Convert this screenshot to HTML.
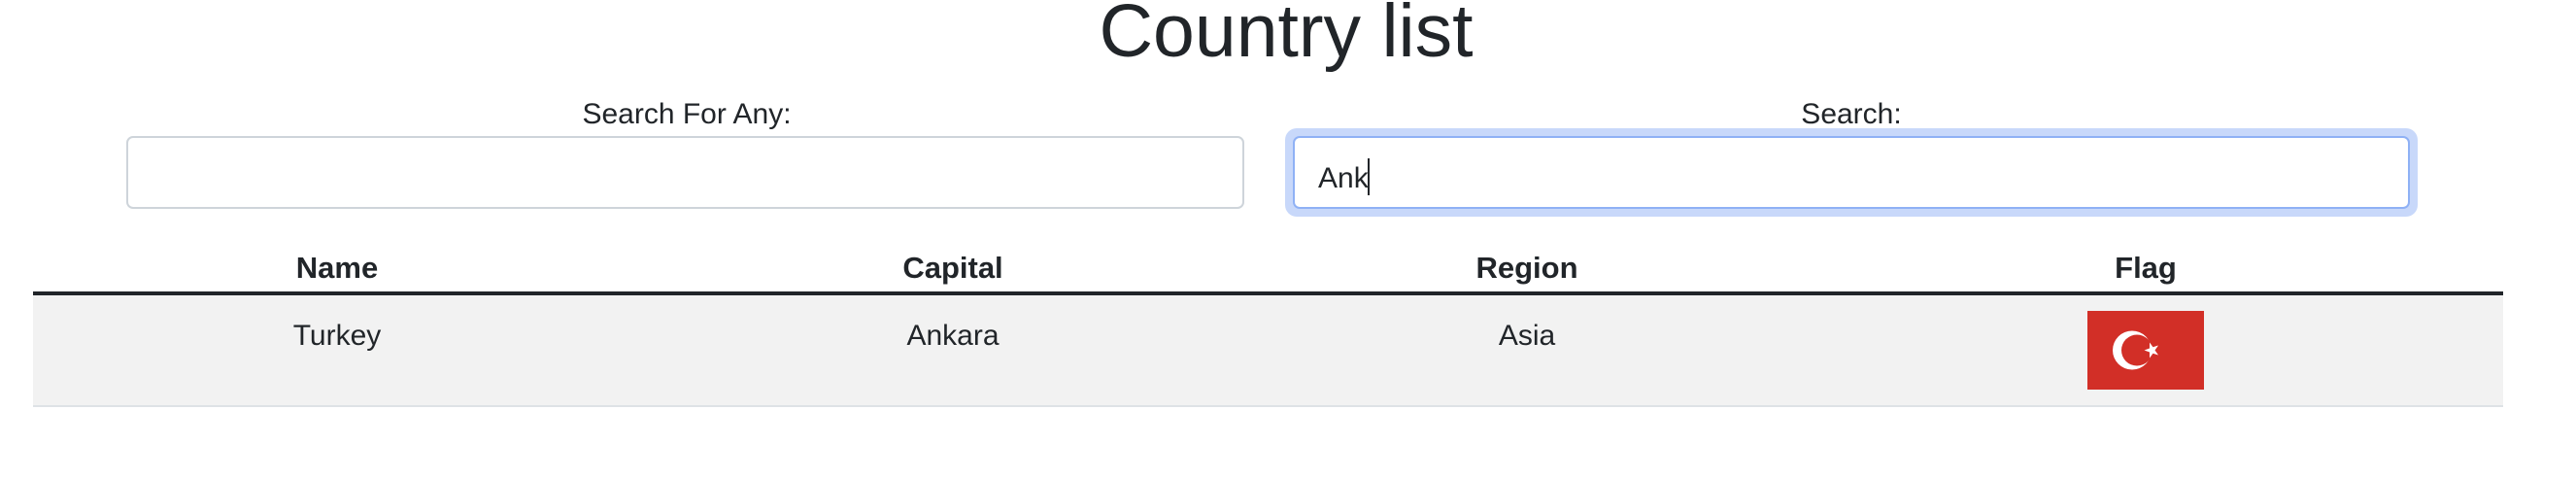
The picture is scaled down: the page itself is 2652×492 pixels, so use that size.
<!DOCTYPE html>
<html><head><meta charset="utf-8"><style>
html,body{margin:0;padding:0;background:#fff;width:2652px;height:492px;overflow:hidden;font-family:"Liberation Sans",Arial,sans-serif;color:#212529}
.a{position:absolute;white-space:nowrap;line-height:1}
.c{transform:translateX(-50%)}
.inp{position:absolute;box-sizing:border-box;border:2px solid #ced4da;border-radius:7px;background:#fff}
</style></head><body>
<div class="a c" style="left:1324px;top:-6px;font-size:77px;font-weight:500">Country list</div>
<div class="a c" style="left:707px;top:103px;font-size:30px">Search For Any:</div>
<div class="a c" style="left:1906px;top:103px;font-size:30px">Search:</div>
<div class="inp" style="left:130px;top:140px;width:1151px;height:75px"></div>
<div style="position:absolute;left:1323px;top:132px;width:1166px;height:91px;border-radius:12px;background:#c8d8fa"></div>
<div class="inp" style="left:1331px;top:140px;width:1150px;height:75px;border-color:#8fb1f5"></div>
<div class="a" style="left:1357px;top:163px;font-size:30px">Ank<span style="display:inline-block;width:2px;height:38px;background:#212529;vertical-align:-8px;margin-left:-1px"></span></div>
<div class="a c" style="left:347px;top:260px;font-size:31px;font-weight:bold">Name</div>
<div class="a c" style="left:981px;top:260px;font-size:31px;font-weight:bold">Capital</div>
<div class="a c" style="left:1572px;top:260px;font-size:31px;font-weight:bold">Region</div>
<div class="a c" style="left:2209px;top:260px;font-size:31px;font-weight:bold">Flag</div>
<div style="position:absolute;left:34px;top:300px;width:2543px;height:4px;background:#212529"></div>
<div style="position:absolute;left:34px;top:304px;width:2543px;height:113px;background:#f2f2f2;border-bottom:2px solid #dee2e6"></div>
<div class="a c" style="left:347px;top:331px;font-size:30px">Turkey</div>
<div class="a c" style="left:981px;top:331px;font-size:30px">Ankara</div>
<div class="a c" style="left:1572px;top:331px;font-size:30px">Asia</div>
<svg style="position:absolute;left:2149px;top:320px" width="120" height="81" viewBox="0 0 120 81">
<rect width="120" height="81" fill="#d22f27"/>
<circle cx="46" cy="40.5" r="20" fill="#fff"/>
<circle cx="51" cy="40.5" r="16" fill="#d22f27"/>
<polygon fill="#fff" points="66,33 68,38.5 74,38.5 69.2,42 71,47.5 66,44 61,47.5 62.8,42 58,38.5 64,38.5" transform="rotate(-90 66 40.5)"/>
</svg>
</body></html>
